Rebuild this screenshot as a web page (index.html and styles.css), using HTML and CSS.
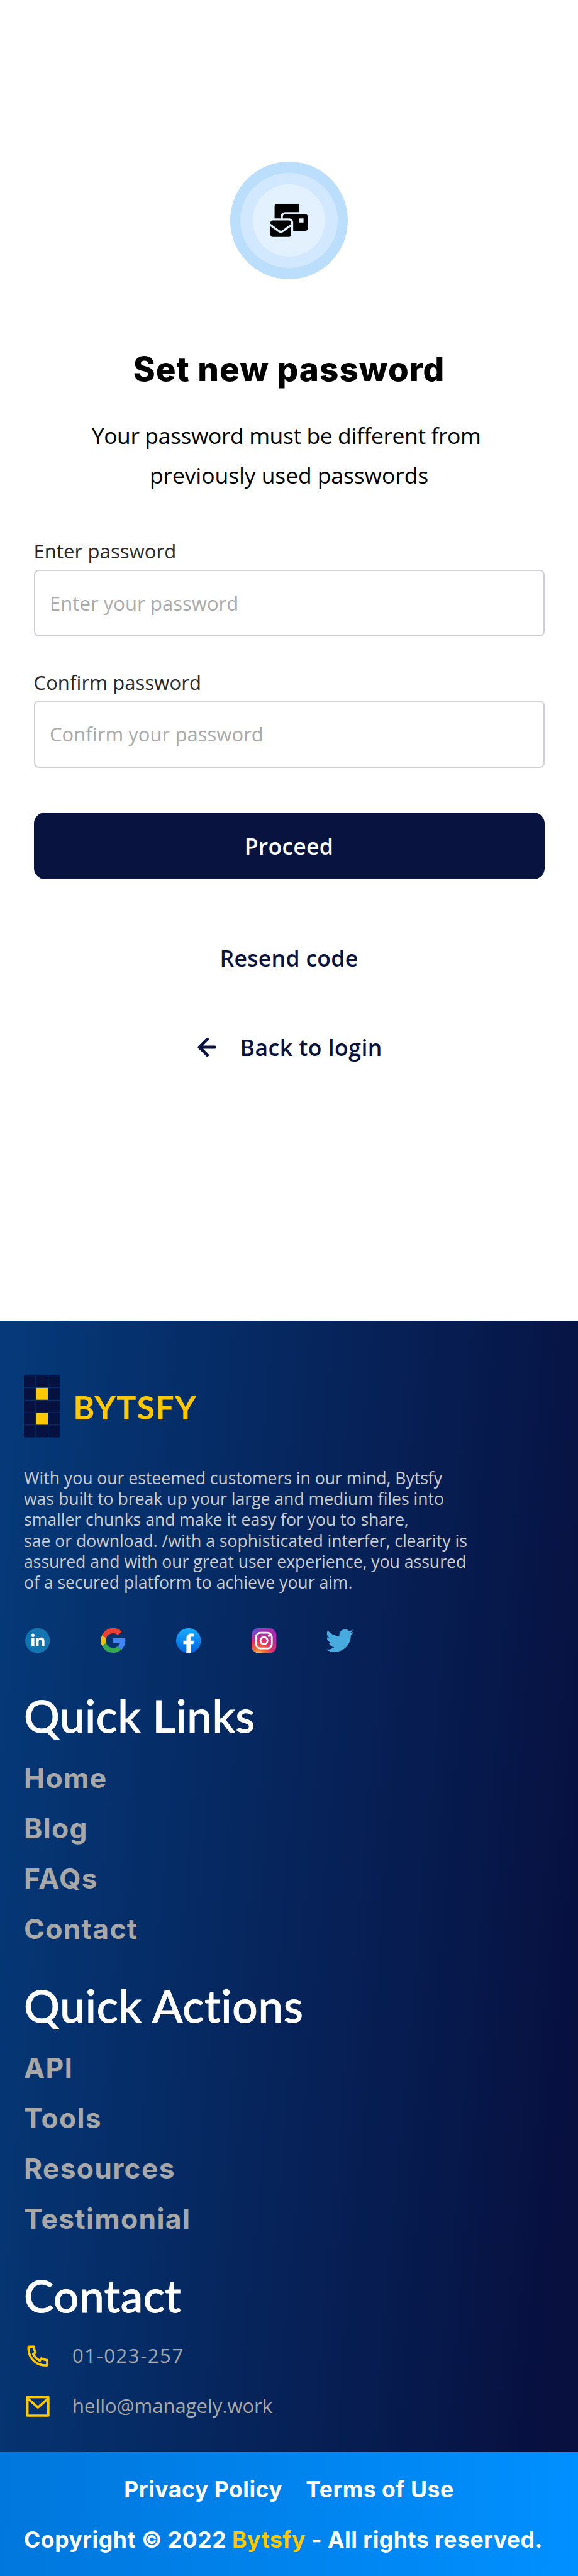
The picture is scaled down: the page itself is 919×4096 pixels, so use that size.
FILE: index.html
```html
<!DOCTYPE html>
<html lang="en">
<head>
<meta charset="utf-8">
<title>Set new password</title>
<link rel="stylesheet" href="styles.css">
</head>
<body>
<main class="reset">
  <div class="badge"><div class="badge-mid"><div class="badge-core">
    <svg class="badge-icon" viewBox="0 0 576 512"><path d="M160 448c-25.6 0-51.2-22.4-64-32-64-44.8-83.2-60.8-96-70.4V480c0 17.67 14.33 32 32 32h256c17.67 0 32-14.33 32-32V345.6c-12.8 9.6-32 25.6-96 70.4-12.8 9.6-38.4 32-64 32zm128-192H32c-17.67 0-32 14.33-32 32v16c25.6 19.2 22.4 19.2 115.2 86.4 9.6 6.4 28.8 25.6 44.8 25.6s35.2-19.2 44.8-22.4c92.8-67.2 89.6-67.2 115.2-86.4V288c0-17.67-14.33-32-32-32zm256-96H224c-17.67 0-32 14.33-32 32v32h96c33.21 0 60.59 25.42 63.71 57.82l.29-.22V416h192c17.67 0 32-14.33 32-32V192c0-17.67-14.33-32-32-32zm-32 128h-64v-64h64v64zm-352-96c0-35.29 28.71-64 64-64h224V32c0-17.67-14.33-32-32-32H96C78.33 0 64 14.33 64 32v192h96v-32z"/></svg>
  </div></div></div>
  <h1 class="title">Set new password</h1>
  <p class="subtitle">Your password must be different from&nbsp;<br><span class="subtitle-end">previously used passwords</span></p>
  <form class="form">
    <label class="label" for="pw">Enter password</label>
    <input class="input" id="pw" type="password" placeholder="Enter your password">
    <label class="label label-next" for="pw2">Confirm password</label>
    <input class="input" id="pw2" type="password" placeholder="Confirm your password">
    <button class="button" type="button">Proceed</button>
  </form>
  <a class="link resend">Resend code</a>
  <a class="link back">
    <svg class="arrow" viewBox="0 0 30 30"><path d="M15.5 2.5 3 15l12.500 12.500M3 15h24.500"/></svg>
    <span>Back to login</span>
  </a>
</main>

<footer class="footer">
  <div class="brand">
    <svg class="brand-mark" viewBox="0 0 78 133">
      <g fill="#07113f">
        <path d="M3 0H25V25.500H0V3Q0 0 3 0Z"/><rect x="26.300" width="25.200" height="25.500"/><path d="M52.800 0H75Q78 0 78 3V25.500H52.800Z"/>
        <rect y="26.800" width="25" height="25.500"/><rect x="52.800" y="26.800" width="25.200" height="25.500"/>
        <rect y="53.600" width="25" height="25.500"/><path d="M26.300 53.600H75Q78 53.600 78 56.600V76.100Q78 79.100 75 79.100H26.300Z"/>
        <rect y="80.400" width="25" height="25.500"/><rect x="52.800" y="80.400" width="25.200" height="25.500"/>
        <path d="M0 107.200H25V133H3Q0 133 0 130Z"/><rect x="26.300" y="107.200" width="25.200" height="25.800"/><path d="M52.800 107.200H78V130Q78 133 75 133H52.800Z"/>
      </g>
      <g fill="#ffc800"><rect x="26.300" y="26.800" width="25.200" height="25.500"/><rect x="26.300" y="80.400" width="25.200" height="25.500"/></g>
    </svg>
    <span class="brand-name">BYTSFY</span>
  </div>
  <p class="about">With you our esteemed customers in our mind, Bytsfy<br>was built to break up your large and medium files into<br>smaller chunks and make it easy for you to share,<br>sae or download. /with a sophisticated interfer, clearity is<br>assured and with our great user experience, you assured<br>of a secured platform to achieve your aim.</p>
  <div class="social">
    <svg viewBox="0 0 40 40"><circle cx="20" cy="20" r="20" fill="#1275b1"/><g fill="#fff"><circle cx="12.600" cy="11.300" r="2.600"/><path d="M10.300 15.400h4.500v13.800h-4.500zM17.200 15.400h4.300v1.900c.7-1.300 2.200-2.200 4.100-2.200 4.400 0 5.500 2.700 5.500 6.600v7.500h-4.500v-6.800c0-1.900-.3-3.500-2.300-3.500-2 0-2.600 1.500-2.600 3.500v6.800h-4.500z"/></g></svg>
    <svg viewBox="3.500 4 40.500 40"><path fill="#fbbc05" d="M12.600 28.100A12 12 0 0 1 12.500 20L6 14.700A20 20 0 0 0 5.800 32.500z"/><path fill="#ea4335" d="M24 12c3.100 0 5.800 1.100 7.900 3l5.900-5.900A20 20 0 0 0 5.800 14.800l6.800 5.300A12 12 0 0 1 24 12z"/><path fill="#34a853" d="M24 44c5.200 0 9.900-2 13.400-5.200l-6.200-5.200A12 12 0 0 1 12.700 28.100l-6.900 4.800A20 20 0 0 0 24 44z"/><path fill="#4285f4" d="M24 20v8h11.300a12 12 0 0 1-4.100 5.600l6.200 5.200C37 39.200 44 34 44 24c0-1.300-.1-2.700-.4-4z"/></svg>
    <svg viewBox="0 0 36 36"><defs><linearGradient id="fb" x1="0" y1="0" x2="0" y2="1"><stop stop-color="#18acfe"/><stop offset="1" stop-color="#0163e0"/></linearGradient></defs><circle cx="18" cy="18" r="18" fill="url(#fb)"/><path fill="#fff" d="M25 23l.8-5H21v-3.500c0-1.400.5-2.500 2.700-2.500H26V7.900c-1.300-.2-2.700-.4-4-.4-4.100 0-7 2.500-7 7v3.500h-4.500v5H15v12.700c1 .1 2 .3 3 .3s2-.1 3-.2V23h4z"/></svg>
    <svg viewBox="0 0 40 40"><defs><radialGradient id="ig1" cx=".27" cy="1.080" r="1"><stop stop-color="#fed576"/><stop offset=".25" stop-color="#f47133"/><stop offset=".6" stop-color="#d6306f"/><stop offset="1" stop-color="#a32fb0"/></radialGradient><radialGradient id="ig2" cx="0" cy="0" r=".6"><stop stop-color="#3f62dc"/><stop offset="1" stop-color="#8a3ac8" stop-opacity="0"/></radialGradient></defs><rect width="40" height="40" rx="11" fill="url(#ig1)"/><rect width="40" height="40" rx="11" fill="url(#ig2)"/><g fill="none" stroke="#fff" stroke-width="2.800"><rect x="7.300" y="7.300" width="25.400" height="25.400" rx="7"/><circle cx="20" cy="20" r="5.700"/></g><circle cx="28" cy="12" r="1.900" fill="#fff"/></svg>
    <svg class="bird" viewBox="0 2.200 24 19.600"><path fill="#48abe0" d="M23.953 4.570a10 10 0 0 1-2.825.775 4.958 4.958 0 0 0 2.163-2.723c-.951.555-2.005.959-3.127 1.184a4.920 4.920 0 0 0-8.384 4.482C7.690 8.095 4.067 6.130 1.640 3.162a4.822 4.822 0 0 0-.666 2.475c0 1.710.870 3.213 2.188 4.096a4.904 4.904 0 0 1-2.228-.616v.060a4.923 4.923 0 0 0 3.946 4.827 4.996 4.996 0 0 1-2.212.085 4.936 4.936 0 0 0 4.604 3.417 9.867 9.867 0 0 1-6.102 2.105c-.390 0-.779-.023-1.170-.067a13.995 13.995 0 0 0 7.557 2.209c9.053 0 13.998-7.496 13.998-13.985 0-.210 0-.420-.015-.630A9.935 9.935 0 0 0 24 4.590z"/></svg>
  </div>
  <h2 class="heading links-heading">Quick Links</h2>
  <ul class="list"><li>Home</li><li>Blog</li><li>FAQs</li><li>Contact</li></ul>
  <h2 class="heading actions-heading">Quick Actions</h2>
  <ul class="list"><li>API</li><li>Tools</li><li>Resources</li><li>Testimonial</li></ul>
  <h2 class="heading">Contact</h2>
  <div class="contact">
    <div class="contact-row"><svg viewBox="0 0 24 24"><path d="M9.366 10.682a10.556 10.556 0 0 0 3.952 3.952l.884-1.238a1 1 0 0 1 1.294-.296 11.422 11.422 0 0 0 4.583 1.364 1 1 0 0 1 .921.997v4.462a1 1 0 0 1-.898.995c-.53.055-1.064.082-1.602.082C9.940 21 3 14.060 3 5.500c0-.538.027-1.072.082-1.602A1 1 0 0 1 4.077 3h4.462a1 1 0 0 1 .997.921A11.422 11.422 0 0 0 10.900 8.504a1 1 0 0 1-.296 1.294l-1.238.884zm-2.522-.657l1.900-1.357A13.410 13.410 0 0 1 7.647 5H5.010c-.006.166-.009.333-.009.5C5 12.956 11.044 19 18.500 19c.167 0 .334-.003.5-.010v-2.637a13.410 13.410 0 0 1-3.668-1.097l-1.357 1.900a12.442 12.442 0 0 1-1.588-.75l-.058-.033a12.556 12.556 0 0 1-4.702-4.702l-.033-.058a12.442 12.442 0 0 1-.75-1.588z"/></svg><span class="phone">01-023-257</span></div>
    <div class="contact-row"><svg viewBox="0 0 24 24"><path d="M3 3h18a1 1 0 0 1 1 1v16a1 1 0 0 1-1 1H3a1 1 0 0 1-1-1V4a1 1 0 0 1 1-1zm17 4.238l-7.928 7.100L4 7.216V19h16V7.238zM4.511 5l7.550 6.662L19.502 5H4.511z"/></svg><span>hello@managely.work</span></div>
  </div>
</footer>
<div class="legal">
  <div class="legal-links"><a>Privacy Policy</a><a>Terms of Use</a></div>
  <p class="copyright">Copyright © 2022 <span class="accent">Bytsfy</span> - All rights reserved.</p>
</div>
</body>
</html>
```
FILE: styles.css
```css
* { box-sizing: border-box; margin: 0; padding: 0; }
body { width: 919px; height: 4096px; overflow: hidden; background: #fff; font-family: "Open Sans", sans-serif; }
svg { display: block; flex: none; }

.reset { height: 2100px; padding: 257.4px 53.5px 0; display: flex; flex-direction: column; align-items: center; }
.badge, .badge-mid, .badge-core { display: flex; align-items: center; justify-content: center; border-radius: 50%; }
.badge { width: 186.5px; height: 186.5px; background: #badefc; }
.badge-mid { width: 155.4px; height: 151px; background: #d1e8fe; }
.badge-core { width: 115.4px; height: 115.4px; background: #e3f1ff; }
.badge-icon { width: 59.2px; height: 53px; }
.title { margin-top: 113px; font: 800 53px/60px Inter, sans-serif; letter-spacing: 1px; color: #000; white-space: nowrap; }
.subtitle { margin-top: 44.6px; font-size: 35.5px; line-height: 62.1px; letter-spacing: -.42px; text-align: center; color: #000; white-space: nowrap; }
.subtitle-end { letter-spacing: -.1px; }

.form { width: 100%; margin-top: 70.4px; display: flex; flex-direction: column; }
.label { font-size: 31px; line-height: 40px; letter-spacing: .1px; color: #2a2a2a; }
.label-next { margin-top: 52.7px; }
.input { height: 106.300px; margin-top: 9.6px; padding: 0 25px 0 23.500px; border: 2px solid #cdd0db; border-radius: 8px; background: #fff; font: 400 31px "Open Sans", sans-serif; letter-spacing: .05px; outline: 0; }
.input::placeholder { color: #aaa; opacity: 1; }
.button { height: 106.600px; margin-top: 71px; border: 0; border-radius: 17.500px; background: #08133f; color: #fff; font: 600 35.5px "Open Sans", sans-serif; letter-spacing: .3px; }
.link { font-size: 35.5px; font-weight: 600; line-height: 50px; color: #08133f; }
.resend { margin-top: 99.5px; letter-spacing: .3px; }
.back { margin-top: 92.2px; padding-left: 3px; display: flex; align-items: center; gap: 37.500px; letter-spacing: .5px; }
.arrow { width: 30px; height: 30px; fill: none; stroke: #08133f; stroke-width: 5; stroke-linecap: round; stroke-linejoin: round; }

.footer { height: 1799.300px; padding: 87.4px 38px 0; background: linear-gradient(95deg, #053a7a 0%, #07103f 95%); }
.brand { display: flex; align-items: center; gap: 20.500px; }
.brand-mark { width: 57.700px; height: 98.4px; }
.brand-name { font: 700 52px/60px Lato, sans-serif; letter-spacing: 1.200px; color: #ffc800; }
.about { margin-top: 48px; font-size: 26.600px; line-height: 33.3px; letter-spacing: -.02px; color: #cbcbcb; white-space: nowrap; }
.social { display: flex; gap: 80.600px; margin: 55.6px 0 0 2.4px; }
.social svg { width: 39.4px; height: 39.4px; }
.social .bird { width: 44.4px; margin-left: -2.500px; }
.heading { margin-top: 38.500px; font: 500 71px/86px Lato, sans-serif; letter-spacing: .45px; color: #fff; -webkit-text-stroke: .9px #fff; }
.links-heading { margin-top: 56.2px; }
.actions-heading { letter-spacing: .75px; }
.list { margin-top: 17px; list-style: none; font: 700 44.4px/79.950px Inter, sans-serif; letter-spacing: 1.300px; color: #a8a8a8; }
.contact { margin-top: 12.700px; }
.contact-row { height: 79.900px; display: flex; align-items: center; gap: 32.600px; font-size: 31px; line-height: 79.900px; color: #a8a8a8; }
.contact-row svg { width: 44.4px; height: 44.4px; fill: #ffc800; }
.phone { letter-spacing: 1.600px; }

.legal { height: 196.700px; padding: 19.300px 38px 0; background: linear-gradient(92deg, #0077dc, #0090ff); color: #fff; font: 700 35.5px/79.900px Inter, sans-serif; letter-spacing: .55px; white-space: nowrap; }
.legal-links { display: flex; justify-content: center; gap: 37px; }
.accent { color: #ffc800; }
```
